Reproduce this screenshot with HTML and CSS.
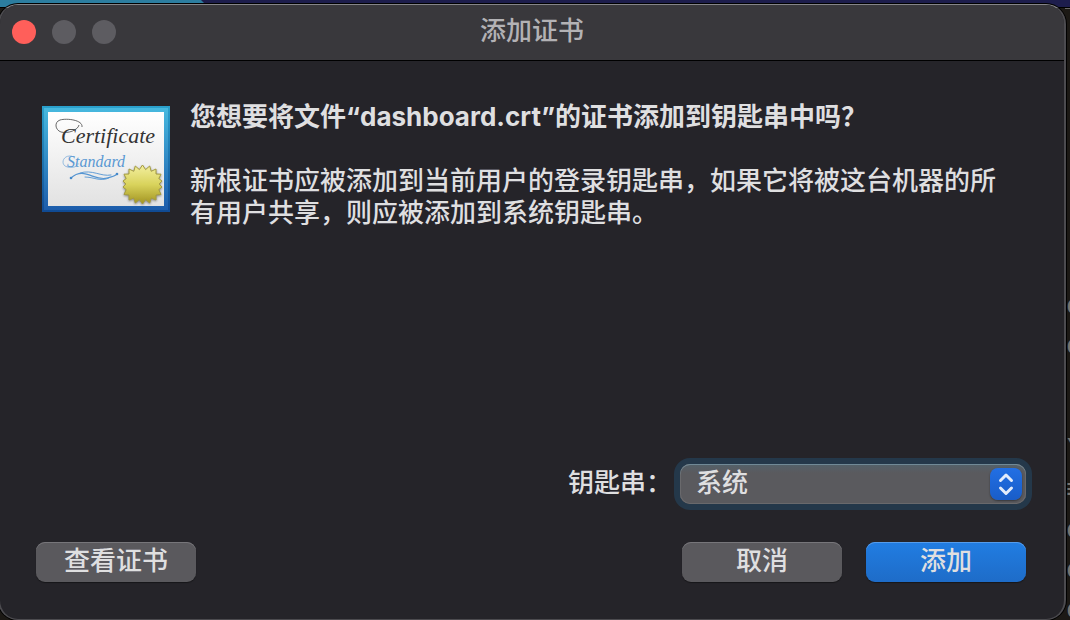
FILE: index.html
```html
<!DOCTYPE html>
<html lang="zh-CN">
<head>
<meta charset="utf-8">
<title>添加证书</title>
<link rel="stylesheet" href="styles.css">
</head>
<body>
<div class="desktop">
  <div class="wallpaper"><svg viewBox="0 0 230 10" width="230" height="10" aria-hidden="true"><path d="M0 0H201L211 10H0Z" fill="#2c7d9f"/></svg></div>
  <div class="terminal" aria-hidden="true">
    <div class="terminal-head">⋮</div>
    <div class="terminal-mid">c<br>c</div>
    <div class="terminal-tail">\<br>≡<br>c<br>c<br>c</div>
  </div>
  <main class="dialog">
    <header class="titlebar">
      <div class="lights">
        <button class="light light-close" type="button" aria-label="关闭"></button>
        <button class="light" type="button" aria-label="最小化" disabled></button>
        <button class="light" type="button" aria-label="缩放" disabled></button>
      </div>
      <h1 class="title">添加证书</h1>
    </header>
    <form class="content">
      <section class="message">
        <svg class="certificate" viewBox="0 0 128 106" width="128" height="106" role="img" aria-label="Certificate">
          <defs>
            <linearGradient id="frame" x2="0" y2="1"><stop stop-color="#2aa0cc"/><stop offset="1" stop-color="#104a94"/></linearGradient>
            <linearGradient id="inner" x2="0" y2="1"><stop stop-color="#47b9df"/><stop offset="1" stop-color="#1c5cab"/></linearGradient>
            <linearGradient id="paper" x2="0" y2="1"><stop stop-color="#ffffff"/><stop offset="1" stop-color="#e2e2e2"/></linearGradient>
            <linearGradient id="gold" x2="0" y2="1"><stop stop-color="#f3efa0"/><stop offset=".5" stop-color="#d9d35c"/><stop offset="1" stop-color="#a29421"/></linearGradient>
          </defs>
          <path fill="url(#frame)" d="M0 0H128V106H0Z"/>
          <path fill="url(#inner)" d="M2 2H126V104H2Z"/>
          <path fill="url(#paper)" d="M6 6H122V100H6Z"/>
          <path d="M40 21C41 14 25 12 18 14C12 16 13 24 19 26C26 28 36 24 37 19" fill="none" stroke="#444" stroke-width=".8"/>
          <text class="cert-name" x="19" y="37">Certificate</text>
          <path d="M32 51C23 47 18 56 23 60C28 63 37 61 36 57" fill="none" stroke="#5998d3" stroke-width=".6"/>
          <text class="cert-kind" x="25" y="61">Standard</text>
          <g fill="none" stroke="#5595d2" stroke-linecap="round">
            <path stroke-width="1.2" d="M29 72C42 60 53 76 65 72C70 71 73 70 75 68"/>
            <path stroke-width=".9" d="M38 67C50 63 59 71 69 69M43 71C52 71 58 76 67 72"/>
          </g>
          <circle cx="29" cy="72" r="1.3" fill="#4689c9"/><circle cx="75" cy="68" r="1.3" fill="#4689c9"/>
          <path class="seal" fill="url(#gold)" d="M100.5 59L103.6 63.6L107.7 60L109.2 65.3L114 63L114 68L119 68.2L116.8 72.6L120 75L117.2 78L120 81L116.8 83.6L119 88.5L114 89L114 94L109.2 92L107.7 97L103.6 93.6L100.5 98L97.4 93.6L93.3 97L91.8 92L87 94L87 89L82 88.5L84.2 83.6L81 81L83.8 78L81 75L84.2 72.6L82 68.2L87 68L87 63L91.8 65.3L93.3 60L97.4 63.6Z"/>
        </svg>
        <div class="copy">
          <h2 class="question">您想要将文件“dashboard.crt”的证书添加到钥匙串中吗？</h2>
          <p class="detail">新根证书应被添加到当前用户的登录钥匙串，如果它将被这台机器的所有用户共享，则应被添加到系统钥匙串。</p>
        </div>
      </section>
      <div class="keychain">
        <label class="keychain-label" for="keychain">钥匙串：</label>
        <div class="popup">
          <select class="popup-select" id="keychain"><option>系统</option></select>
          <svg class="popup-arrows" viewBox="0 0 32 32" width="32" height="32" aria-hidden="true"><path d="M10.500 12.500L16 7L21.500 12.500M10.500 20L16 25.500L21.500 20" fill="none" stroke="#e3ecfb" stroke-width="3" stroke-linecap="round" stroke-linejoin="round"/></svg>
        </div>
      </div>
      <footer class="actions">
        <button class="button view" type="button">查看证书</button>
        <button class="button" type="button">取消</button>
        <button class="button primary" type="submit">添加</button>
      </footer>
    </form>
  </main>
</div>
</body>
</html>
```
FILE: styles.css
```css
* {
  box-sizing: border-box;
}

body {
  margin: 0;
  font: 500 26px/32px Inter, "Noto Sans CJK SC", sans-serif;
  color: #dfdfe0;
}

h1, h2, p {
  margin: 0;
}

button, select {
  margin: 0;
  border: 0;
  font: inherit;
  color: inherit;
}

.desktop {
  position: relative;
  display: flex;
  min-height: 100vh;
  padding: 4px 4px 0 0;
  overflow: hidden;
  background: #1c1915;
}

.wallpaper {
  position: absolute;
  top: 0;
  left: 0;
  right: 0;
  height: 8px;
  overflow: hidden;
  background: #1d1d4c;
  border-bottom: 1px solid #000;
}

.wallpaper svg {
  display: block;
}

.terminal {
  position: absolute;
  top: 8px;
  right: 0;
  bottom: 0;
  width: 5px;
  overflow: hidden;
  border-top: 1px solid #6b6864;
  padding-left: 1px;
  font: 28px/40px "Liberation Mono", monospace;
  color: #77746f;
}

.terminal-head {
  padding-top: 164px;
}

.terminal-mid {
  padding-top: 74px;
}

.terminal-tail {
  padding-top: 64px;
}

.dialog {
  position: relative;
  flex: 1;
  display: flex;
  flex-direction: column;
  margin-left: -2px;
  overflow: hidden;
  border: 2px solid #4c4b4f;
  border-top: 1px solid #858589;
  border-bottom-width: 1px;
  border-radius: 20px;
  background: #252429;
  box-shadow: 0 0 0 1px #000;
}

.titlebar {
  display: grid;
  grid-template-columns: 1fr auto 1fr;
  align-items: center;
  height: 56px;
  padding: 0 12px 2px;
  background: #39383c;
  border-bottom: 1px solid #000;
}

.lights {
  display: flex;
  gap: 16px;
}

.light {
  width: 24px;
  height: 24px;
  padding: 0;
  border-radius: 50%;
  background: #5d5c61;
}

.light-close {
  background: #ff5f5a;
}

.title {
  padding-bottom: 2px;
  font-size: 26px;
  font-weight: 500;
  color: #b3b2b5;
}

.content {
  flex: 1;
  display: flex;
  flex-direction: column;
  padding: 40px 38px 37px 36px;
}

.message {
  display: flex;
  align-items: flex-start;
  gap: 20px;
  padding-left: 6px;
}

.certificate {
  flex: none;
  margin-top: 5px;
}

.cert-name {
  font: italic 22px "Liberation Serif", serif;
  fill: #333;
}

.cert-kind {
  font: italic 16px "Liberation Serif", serif;
  fill: #5998d3;
}

.seal {
  stroke: #a49b3f;
  filter: drop-shadow(0 1px 1px #0006);
}

.copy {
  padding-right: 10px;
}

.question {
  font-size: 26px;
  font-weight: 700;
}

.detail {
  margin-top: 32px;
}

.keychain {
  display: flex;
  justify-content: flex-end;
  align-items: center;
  gap: 8px;
  margin-top: auto;
}

.keychain-label {
  padding-bottom: 2px;
}

.popup {
  position: relative;
  width: 346px;
  height: 40px;
  border-radius: 10px;
  box-shadow: 0 0 0 6px #24384a;
}

.popup-select {
  display: block;
  width: 100%;
  height: 100%;
  padding: 0 44px 2px 16px;
  appearance: none;
  outline: 0;
  border-radius: 10px;
  background: linear-gradient(#53616a, #5a5a5e 9px);
  box-shadow: inset 0 1px #708996, inset 0 0 0 1px #69696c;
}

.popup-arrows {
  position: absolute;
  top: 4px;
  right: 4px;
  border-radius: 8px;
  background: linear-gradient(#226fe4, #195dc8);
  box-shadow: 0 1px 2px #0006;
  pointer-events: none;
}

.actions {
  display: flex;
  gap: 24px;
  margin-top: 38px;
}

.button {
  width: 160px;
  height: 40px;
  padding: 0 0 3px;
  border-radius: 9px;
  background: #5a595d;
  box-shadow: inset 0 1px #77767a, 0 1px 1px #0006;
}

.view {
  margin-right: auto;
}

.primary {
  background: linear-gradient(#217de2, #1e6cc8);
  box-shadow: inset 0 1px #559ceb, 0 1px 1px #0006;
}
```
